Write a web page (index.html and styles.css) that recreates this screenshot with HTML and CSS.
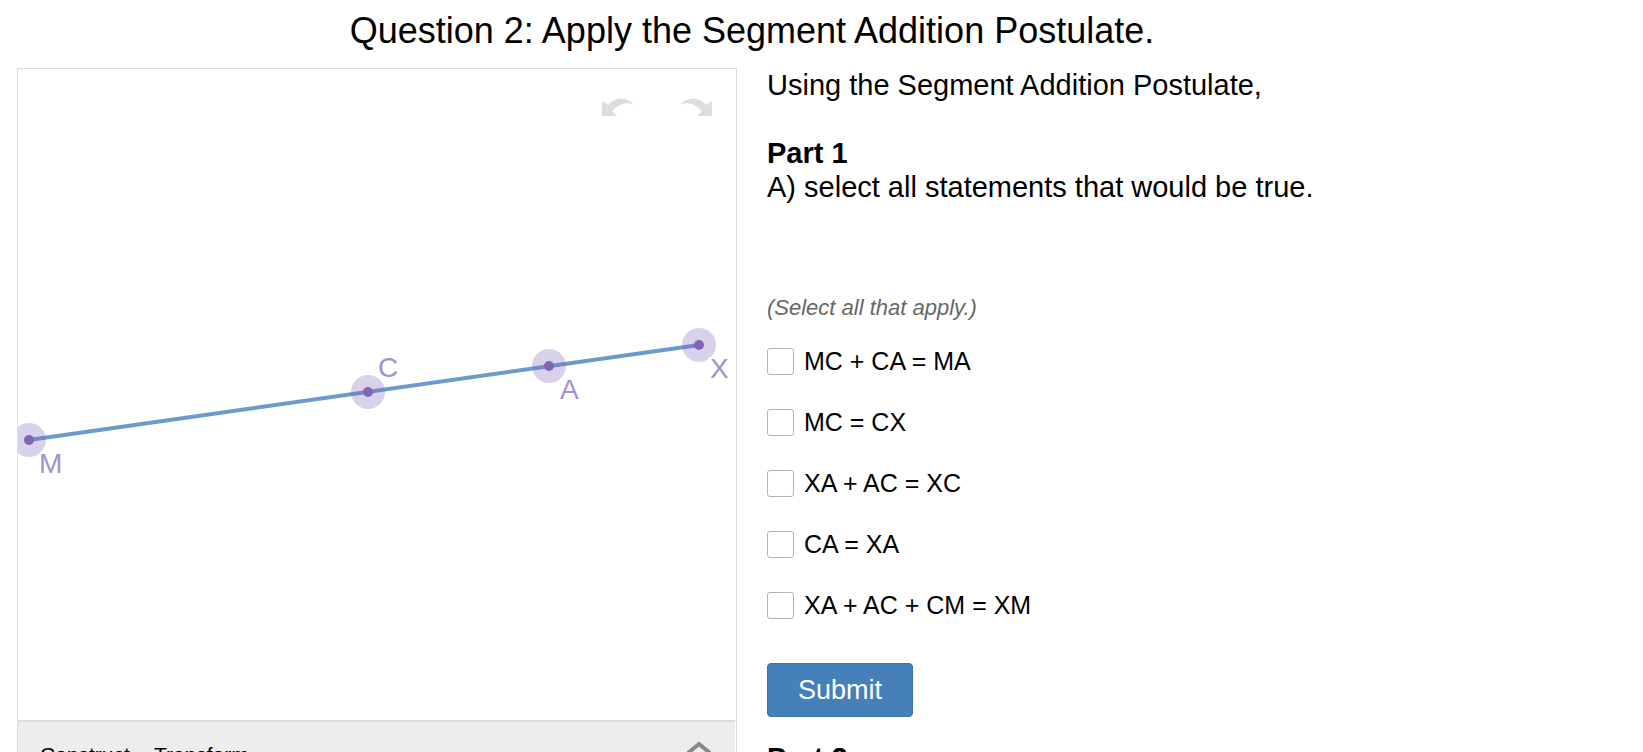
FILE: index.html
```html
<!DOCTYPE html>
<html lang="en">
<head>
    <meta charset="UTF-8">
    <meta name="viewport" content="width=device-width, initial-scale=1.0">
    <title>Segment Addition Postulate</title>
    <link rel="stylesheet" href="styles.css">
</head>
<body>
    <div class="page">
        <h1>Question 2: Apply the Segment Addition Postulate.</h1>
        <div class="columns">
            <div class="sketch">
                <div class="history">
                    <button type="button" aria-label="Undo">
                        <svg width="32" height="18" viewBox="0 0 32 18"><path d="M0 4Q1 3 2 4L6 7C13 -1 24 -2 32 7C24 3 17 6 10 13L15 18H1L0 17Z"/></svg>
                    </button>
                    <button type="button" aria-label="Redo">
                        <svg width="32" height="18" viewBox="0 0 32 18"><path d="M32 4Q31 3 30 4L26 7C19 -1 8 -2 0 7C8 3 15 6 22 13L17 18H31L32 17Z"/></svg>
                    </button>
                </div>
                <svg class="graph" viewBox="0 0 718 651">
                    <line x1="11" y1="371" x2="681" y2="276"/>
                    <g class="halo">
                        <circle cx="11" cy="371" r="17"/>
                        <circle cx="350" cy="323" r="17"/>
                        <circle cx="531" cy="297" r="17"/>
                        <circle cx="681" cy="276" r="17"/>
                    </g>
                    <g class="dot">
                        <circle cx="11" cy="371" r="5"/>
                        <circle cx="350" cy="323" r="5"/>
                        <circle cx="531" cy="297" r="5"/>
                        <circle cx="681" cy="276" r="5"/>
                    </g>
                    <text x="21" y="404">M</text>
                    <text x="360" y="308">C</text>
                    <text x="542" y="330">A</text>
                    <text x="692" y="309">X</text>
                </svg>
                <div class="toolbar">
                    <button type="button">Construct</button>
                    <button type="button">Transform</button>
                    <button type="button" class="expand" aria-label="Expand">
                        <svg width="24" height="16" viewBox="0 0 24 16"><path d="M1 12L12 3L23 12"/></svg>
                    </button>
                </div>
            </div>

            <div class="question">
                <p>Using the Segment Addition Postulate,</p>
                <h2>Part 1</h2>
                <p>A) select all statements that would be true.</p>
                <form onsubmit="event.preventDefault();">
                    <p class="hint">(Select all that apply.)</p>
                    <label><input type="checkbox" name="statement" value="1">MC + CA = MA</label>
                    <label><input type="checkbox" name="statement" value="2">MC = CX</label>
                    <label><input type="checkbox" name="statement" value="3">XA + AC = XC</label>
                    <label><input type="checkbox" name="statement" value="4">CA = XA</label>
                    <label><input type="checkbox" name="statement" value="5">XA + AC + CM = XM</label>
                    <button type="submit" class="btn-submit">Submit</button>
                </form>
                <h2>Part 2</h2>
            </div>
        </div>
    </div>
</body>
</html>
```
FILE: styles.css
```css
body {
    font-family: "Liberation Sans", Arial, sans-serif;
    background-color: #fff;
    color: #000;
    margin: 0;
}
.page {
    box-sizing: border-box;
    height: 100vh;
    overflow: hidden;
    padding: 10px 156px 0 17px;
}
h1 {
    margin: 0 0 16px;
    font-size: 36px;
    line-height: 42px;
    font-weight: normal;
    text-align: center;
}
.columns {
    display: grid;
    grid-template-columns: 1fr 1fr;
    gap: 30px;
    align-items: start;
}
.sketch {
    position: relative;
    border: 1px solid #ddd;
}
.history {
    position: absolute;
    top: 29px;
    right: 24px;
    display: flex;
    gap: 46px;
}
.history button, .toolbar button {
    padding: 0;
    border: none;
    background: none;
    font: inherit;
    color: inherit;
    cursor: pointer;
}
.history svg {
    display: block;
    fill: #ddd;
}
.graph {
    display: block;
    width: 100%;
}
.graph line {
    stroke: #6a9bcc;
    stroke-width: 4;
}
.graph .halo {
    fill: #8064b8;
    fill-opacity: 0.3;
}
.graph .dot {
    fill: #8064b8;
}
.graph text {
    font-size: 28px;
    fill: #a391cf;
    stroke: #fff;
    stroke-width: 3;
    paint-order: stroke;
}
.toolbar {
    display: flex;
    align-items: flex-start;
    gap: 24px;
    margin-right: 1px;
    padding: 17px 24px 20px 22px;
    border-top: 2px solid #ddd;
    background-color: #ededed;
    font-size: 21px;
    line-height: 32px;
}
.toolbar .expand {
    margin-left: auto;
    padding-top: 2px;
}
.expand svg {
    display: block;
    fill: none;
    stroke: #888;
    stroke-width: 4;
}
.question {
    font-size: 29px;
    line-height: 34px;
}
.question p {
    margin: 0;
}
h2 {
    margin: 34px 0 0;
    font-size: 29px;
    line-height: 34px;
}
form {
    display: flex;
    flex-direction: column;
    align-items: flex-start;
    gap: 34px;
    margin: 92px 0 24px;
}
form + h2 {
    margin-top: 0;
}
.question .hint {
    margin-bottom: -6px;
    font-size: 22px;
    line-height: 24px;
    font-style: italic;
    color: #666;
}
label {
    display: flex;
    align-items: flex-start;
    gap: 10px;
    font-size: 25px;
    line-height: 27px;
}
input[type="checkbox"] {
    appearance: none;
    box-sizing: border-box;
    width: 27px;
    height: 27px;
    margin: 0;
    border: 1px solid #b4b4b4;
    border-radius: 3px;
    background-color: #fff;
}
input[type="checkbox"]:checked {
    background-color: #4680b9;
}
.btn-submit {
    margin-top: 10px;
    padding: 10px 30px;
    border: 1px solid #3a70a7;
    border-radius: 4px;
    background-color: #4680b9;
    color: #fff;
    font-family: inherit;
    font-size: 27px;
    line-height: 32px;
    cursor: pointer;
}
```
